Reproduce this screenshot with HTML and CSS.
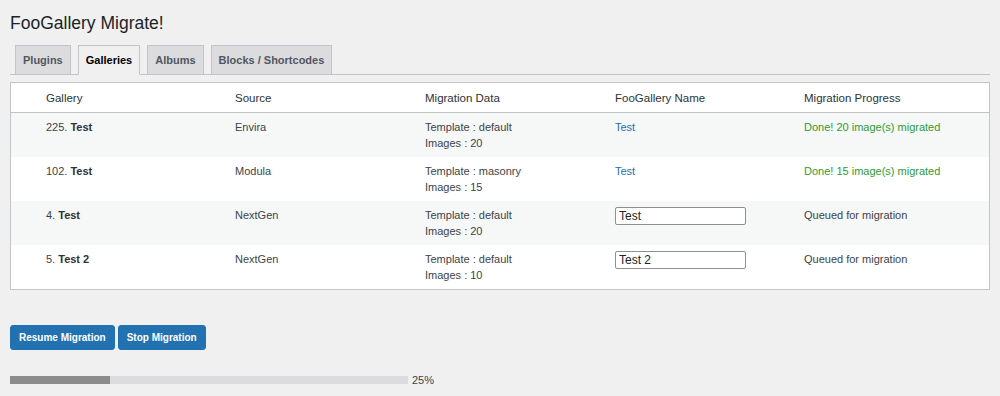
FILE: index.html
```html
<!DOCTYPE html>
<html>

<head>
    <meta name="viewport" content="width=device-width, initial-scale=1">
    <link rel="stylesheet" href="styles.css">
    <title>FooGallery Migrate!</title>
</head>

<body>
    <div class="wrap">
        <h1>FooGallery Migrate!</h1>

        <nav class="nav-tab-wrapper">
            <a class="nav-tab" href="#">Plugins</a>
            <a class="nav-tab nav-tab-active" href="#">Galleries</a>
            <a class="nav-tab" href="#">Albums</a>
            <a class="nav-tab" href="#">Blocks / Shortcodes</a>
        </nav>

        <div class="migrate-table">
            <div class="row head">
                <div></div>
                <div>Gallery</div>
                <div>Source</div>
                <div>Migration Data</div>
                <div>FooGallery Name</div>
                <div>Migration Progress</div>
            </div>
            <div class="row alt">
                <div></div>
                <div>225. <b>Test</b></div>
                <div>Envira</div>
                <div>Template : default<br>Images : 20</div>
                <div><a href="#">Test</a></div>
                <div class="done">Done! 20 image(s) migrated</div>
            </div>
            <div class="row">
                <div></div>
                <div>102. <b>Test</b></div>
                <div>Modula</div>
                <div>Template : masonry<br>Images : 15</div>
                <div><a href="#">Test</a></div>
                <div class="done">Done! 15 image(s) migrated</div>
            </div>
            <div class="row alt">
                <div></div>
                <div>4. <b>Test</b></div>
                <div>NextGen</div>
                <div>Template : default<br>Images : 20</div>
                <div><input type="text" class="name-input" value="Test"></div>
                <div>Queued for migration</div>
            </div>
            <div class="row">
                <div></div>
                <div>5. <b>Test 2</b></div>
                <div>NextGen</div>
                <div>Template : default<br>Images : 10</div>
                <div><input type="text" class="name-input" value="Test 2"></div>
                <div>Queued for migration</div>
            </div>
        </div>

        <div class="actions">
            <button class="button-primary">Resume Migration</button>
            <button class="button-primary">Stop Migration</button>
        </div>

        <div class="progress">
            <div class="progress-bar">
                <div class="progress-fill" style="width: 25%"></div>
            </div>
            <span class="progress-text">25%</span>
        </div>
    </div>
</body>

</html>
```

FILE: styles.css
```css
body {
    margin: 0;
    background: #f0f0f1;
    color: #3c434a;
    font-family: "Liberation Sans", Arial, sans-serif;
    font-size: 11px;
}

.wrap {
    padding: 0 10px;
}

h1 {
    margin: 0;
    padding: 12px 0 0;
    font-size: 17.5px;
    font-weight: 400;
    line-height: 22px;
    color: #1d2327;
}

.nav-tab-wrapper {
    display: flex;
    margin-top: 11px;
    padding-left: 5px;
    border-bottom: 1px solid #c3c4c7;
}

.nav-tab {
    display: block;
    margin-right: 7px;
    margin-bottom: -1px;
    padding: 0 7px;
    height: 28px;
    line-height: 28px;
    border: 1px solid #c3c4c7;
    background: #dcdcde;
    color: #50575e;
    font-size: 11px;
    font-weight: 700;
    text-decoration: none;
}

.nav-tab-active {
    background: #f0f0f1;
    border-bottom-color: #f0f0f1;
    color: #000;
}

.migrate-table {
    margin-top: 7px;
    background: #fff;
    border: 1px solid #c3c4c7;
}

.row {
    display: grid;
    grid-template-columns: 35px 189px 190px 190px 189px 1fr;
    height: 44px;
    line-height: 16px;
    padding-top: 6px;
    box-sizing: border-box;
}

.row.head {
    height: 30px;
    padding-top: 7px;
    border-bottom: 1px solid #c3c4c7;
    color: #2c3338;
    font-size: 11.5px;
}

.row.alt {
    background: #f6f7f7;
}

.row b {
    color: #2c3338;
}

.row a {
    color: #2271b1;
    text-decoration: none;
}

.done {
    color: #2e9b34;
}

.name-input {
    display: block;
    width: 131px;
    height: 18px;
    margin-top: 0;
    padding: 0 3px;
    box-sizing: border-box;
    border: 1px solid #8c8f94;
    border-radius: 2px;
    font-family: inherit;
    font-size: 12px;
    color: #1d2327;
}

.actions {
    display: flex;
    gap: 3px;
    margin-top: 35px;
}

.button-primary {
    height: 25px;
    padding: 0 8px;
    border: 1px solid #2271b1;
    border-radius: 3px;
    background: #2271b1;
    color: #fff;
    font-family: inherit;
    font-size: 10px;
    font-weight: 700;
    cursor: pointer;
}

.progress {
    display: flex;
    align-items: center;
    gap: 4px;
    margin-top: 24px;
}

.progress-bar {
    width: 398px;
    height: 8px;
    background: #dcdcde;
}

.progress-fill {
    height: 100%;
    background: #8c8c8c;
}

.progress-text {
    font-size: 11px;
}
```
